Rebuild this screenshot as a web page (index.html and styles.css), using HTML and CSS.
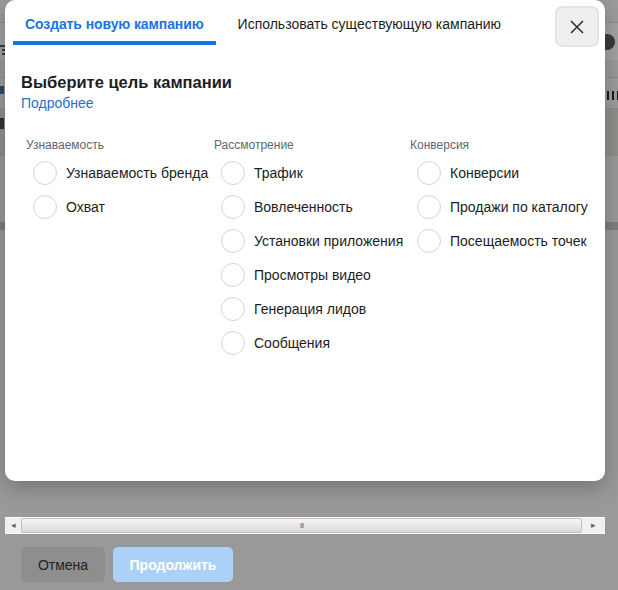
FILE: index.html
```html
<!DOCTYPE html>
<html lang="ru">
<head>
    <meta charset="UTF-8">
    <meta name="viewport" content="width=device-width, initial-scale=1.0">
    <title>Создать кампанию</title>
    <link rel="stylesheet" href="styles.css">
</head>
<body>
    <div class="page">
        <div class="backdrop">
            <div class="bd-row bd-head"></div>
            <div class="bd-row bd-toolbar">
                <span class="bd-mark bd-mark-t"></span>
                <span class="bd-toggle"></span>
            </div>
            <div class="bd-row bd-gap"></div>
            <div class="bd-row bd-titles">
                <span class="bd-mark bd-mark-blue"></span>
                <span class="bd-mark bd-mark-right"></span>
            </div>
            <div class="bd-row bd-green">
                <span class="bd-mark bd-mark-e"></span>
            </div>
            <div class="bd-row bd-blank"></div>
            <div class="bd-row bd-band"></div>
        </div>
        <div class="hscroll">
            <div class="hscroll-arrow">&#9666;</div>
            <div class="hscroll-thumb"><span class="grip">III</span></div>
            <div class="hscroll-arrow">&#9656;</div>
        </div>
        <div class="actions">
            <button class="btn btn-cancel">Отмена</button>
            <button class="btn btn-next">Продолжить</button>
        </div>
    </div>

    <div class="modal">
        <div class="tabs">
            <div class="tab active">Создать новую кампанию</div>
            <div class="tab">Использовать существующую кампанию</div>
        </div>
        <button class="close-btn" aria-label="Закрыть">
            <svg width="14" height="14" viewBox="0 0 14 14">
                <path d="M1 1 L13 13 M13 1 L1 13" stroke="#333" stroke-width="1.6" fill="none"/>
            </svg>
        </button>

        <div class="modal-body">
            <h2>Выберите цель кампании</h2>
            <a class="more" href="#">Подробнее</a>

            <div class="objectives">
                <div class="col col-1">
                    <div class="col-title">Узнаваемость</div>
                    <label class="option"><span class="radio"></span>Узнаваемость бренда</label>
                    <label class="option"><span class="radio"></span>Охват</label>
                </div>
                <div class="col col-2">
                    <div class="col-title">Рассмотрение</div>
                    <label class="option"><span class="radio"></span>Трафик</label>
                    <label class="option"><span class="radio"></span>Вовлеченность</label>
                    <label class="option"><span class="radio"></span>Установки приложения</label>
                    <label class="option"><span class="radio"></span>Просмотры видео</label>
                    <label class="option"><span class="radio"></span>Генерация лидов</label>
                    <label class="option"><span class="radio"></span>Сообщения</label>
                </div>
                <div class="col col-3">
                    <div class="col-title">Конверсия</div>
                    <label class="option"><span class="radio"></span>Конверсии</label>
                    <label class="option"><span class="radio"></span>Продажи по каталогу</label>
                    <label class="option"><span class="radio"></span>Посещаемость точек</label>
                </div>
            </div>
        </div>
    </div>
</body>
</html>
```

FILE: styles.css
```css
body {
    margin: 0;
    padding: 0;
    background-color: #999999;
    font-family: 'Liberation Sans', Arial, sans-serif;
    overflow: hidden;
}
.page {
    width: 618px;
    height: 590px;
}

/* dimmed page behind the dialog */
.backdrop {
    height: 517px;
    overflow: hidden;
}
.bd-row {
    display: flex;
    justify-content: space-between;
    align-items: center;
    overflow: hidden;
}
.bd-head {
    height: 22px;
    background-color: #9b9b9b;
    border-bottom: 1px solid #8c8c8c;
}
.bd-toolbar {
    height: 37px;
    background-color: #a2a2a2;
}
.bd-gap {
    height: 17px;
    background-color: #9a9a9a;
    border-bottom: 1px solid #8a8a8a;
}
.bd-titles {
    height: 30px;
    background-color: #9c9c9c;
    border-bottom: 1px solid #8a8a8a;
}
.bd-green {
    height: 46px;
    background-color: #8f9189;
    border-bottom: 1px solid #888a84;
    align-items: flex-start;
}
.bd-blank {
    height: 66px;
    background-color: #999999;
}
.bd-band {
    height: 8px;
    background-color: #7e7e7e;
}
/* glyph fragments peeking out from under the dialog */
.bd-mark {
    display: block;
    width: 3px;
    height: 11px;
    background-color: #3a3a3a;
}
.bd-mark-t {
    margin-top: 8px;
    width: 4px;
    height: 2px;
    box-shadow: 2px 0 0 #3a3a3a, 2px 4px 0 #3a3a3a, 2px 8px 0 #3a3a3a;
}
.bd-mark-blue {
    width: 4px;
    height: 8px;
    margin-top: -6px;
    background-color: #2f4a6a;
}
.bd-mark-right {
    width: 11px;
    height: 9px;
    margin-top: 4px;
    background: repeating-linear-gradient(90deg, #1a1a1a 0 2px, transparent 2px 5px);
}
.bd-mark-e {
    width: 4px;
    height: 11px;
    margin-top: 9px;
    background-color: #333;
}
.bd-toggle {
    width: 16px;
    height: 16px;
    margin-right: 3px;
    border-radius: 50%;
    background-color: #3b3b3b;
}

/* native-looking horizontal scrollbar */
.hscroll {
    display: flex;
    height: 17px;
    margin: 0 13px 0 5px;
    background-color: #f0f0f0;
    border-top: 1px solid #fafafa;
    border-bottom: 1px solid #fafafa;
    box-sizing: border-box;
}
.hscroll-arrow {
    width: 16px;
    font-size: 9px;
    line-height: 15px;
    text-align: center;
    color: #606060;
}
.hscroll-arrow:last-child {
    width: 23px;
}
.hscroll-thumb {
    flex: 1;
    display: flex;
    justify-content: center;
    align-items: center;
    background: linear-gradient(#f6f6f6, #dadada);
    border: 1px solid #c2c2c2;
    border-radius: 2px;
}
.grip {
    font-size: 8px;
    letter-spacing: -1px;
    color: #777;
}

.actions {
    display: flex;
    gap: 8px;
    padding: 13px 21px 0;
}
.btn {
    height: 35px;
    border: none;
    border-radius: 5px;
    font-family: 'Liberation Sans', Arial, sans-serif;
    font-size: 14px;
    cursor: pointer;
}
.btn-cancel {
    width: 84px;
    background-color: #8e8e8e;
    color: #222;
}
.btn-next {
    width: 120px;
    background-color: #acd1f6;
    color: #ffffff;
    font-weight: bold;
}

/* dialog */
.modal {
    position: absolute;
    left: 5px;
    top: 0;
    width: 600px;
    height: 481px;
    background-color: #ffffff;
    border-radius: 10px;
    box-shadow: 0 6px 22px rgba(0,0,0,0.25);
}
.tabs {
    display: flex;
    gap: 10px;
    padding: 0 8px;
}
.tab {
    padding: 16px 12px 9px;
    font-size: 14px;
    color: #1c1e21;
    border-bottom: 4px solid transparent;
}
.tab.active {
    color: #1b74e4;
    font-weight: bold;
    letter-spacing: -0.1px;
    border-bottom-color: #1b74e4;
}
.close-btn {
    position: absolute;
    top: 6px;
    right: 6px;
    width: 44px;
    height: 41px;
    display: flex;
    align-items: center;
    justify-content: center;
    background-color: #efefef;
    border: 2px solid #e4e4e4;
    border-radius: 7px;
    padding: 0;
    cursor: pointer;
}
.modal-body {
    padding: 28px 16px 0;
}
.modal-body h2 {
    margin: 0;
    font-size: 16.5px;
    font-weight: bold;
    color: #1c1e21;
}
.more {
    display: inline-block;
    margin-top: 3px;
    font-size: 14px;
    color: #2a6fc2;
    text-decoration: none;
}
.objectives {
    display: flex;
    margin-top: 26px;
    padding-left: 5px;
}
.col-1 {
    width: 188px;
}
.col-2 {
    width: 196px;
}
.col-title {
    font-size: 12px;
    color: #606770;
    margin-bottom: 4px;
}
.option {
    display: flex;
    align-items: center;
    height: 34px;
    font-size: 14px;
    color: #1c1e21;
    white-space: nowrap;
}
.radio {
    width: 22px;
    height: 22px;
    margin: 0 9px 0 7px;
    border: 1px solid #d3d5d9;
    border-radius: 50%;
    flex-shrink: 0;
}
```
